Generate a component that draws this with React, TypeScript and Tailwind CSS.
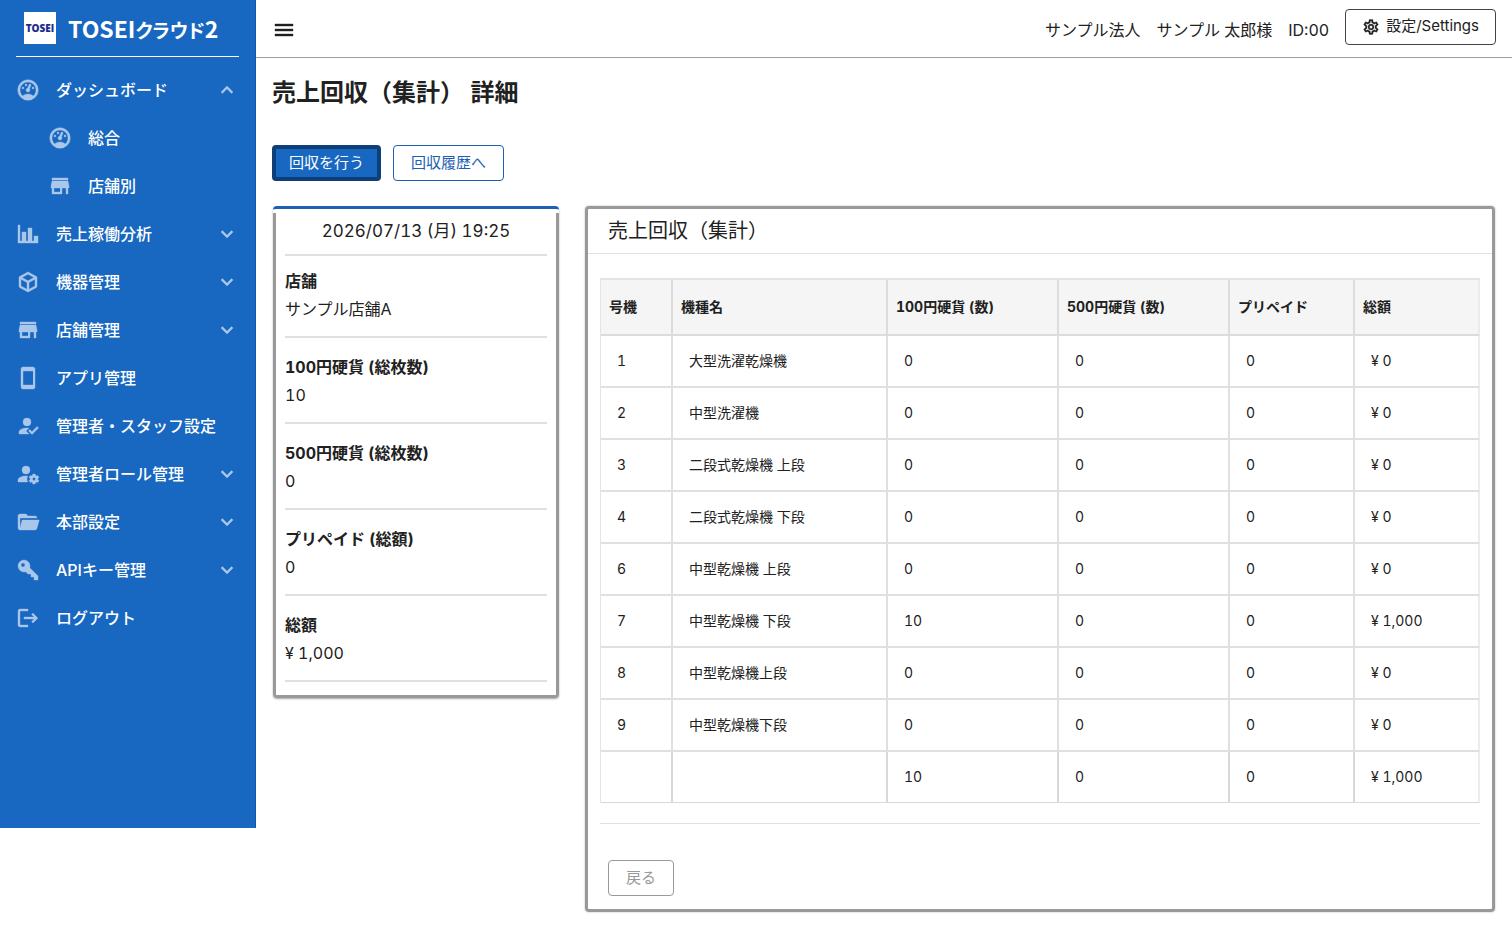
import React from "react";

const icons = {
  gauge:
    "M12,1.7A10.3,10.3 0 1,0 12,22.3A10.3,10.3 0 1,0 12,1.7M12,4A8,8 0 0,1 20,12C20,14.4 19,16.5 17.3,18C15.9,16.7 14,16 12,16C10,16 8.2,16.7 6.7,18C5,16.5 4,14.4 4,12A8,8 0 0,1 12,4M14,5.89C13.62,5.9 13.26,6.15 13.1,6.54L11.81,9.77L11.71,10C11,10.13 10.41,10.6 10.14,11.26C9.73,12.29 10.23,13.45 11.26,13.86C12.29,14.27 13.45,13.77 13.86,12.74C14.12,12.08 14,11.32 13.57,10.76L13.67,10.5L14.96,7.29L14.97,7.26C15.17,6.75 14.92,6.17 14.41,5.96C14.28,5.91 14.15,5.89 14,5.89M10,6A1,1 0 0,0 9,7A1,1 0 0,0 10,8A1,1 0 0,0 11,7A1,1 0 0,0 10,6M7,9A1,1 0 0,0 6,10A1,1 0 0,0 7,11A1,1 0 0,0 8,10A1,1 0 0,0 7,9M17,9A1,1 0 0,0 16,10A1,1 0 0,0 17,11A1,1 0 0,0 18,10A1,1 0 0,0 17,9Z",
  store: "M12,18H6V14H12M21,14V12L20,7H4L3,12V14H4V20H14V14H18V20H20V14M20,4H4V6H20V4Z",
  chart: "M22,21H2V3H4V19H6V10H10V19H12V6H16V19H18V14H22V21Z",
  cube: "M21,16.5C21,16.88 20.79,17.21 20.47,17.38L12.57,21.82C12.41,21.94 12.21,22 12,22C11.79,22 11.59,21.94 11.43,21.82L3.53,17.38C3.21,17.21 3,16.88 3,16.5V7.5C3,7.12 3.21,6.79 3.53,6.62L11.43,2.18C11.59,2.06 11.79,2 12,2C12.21,2 12.41,2.06 12.57,2.18L20.47,6.62C20.79,6.79 21,7.12 21,7.5V16.5M12,4.15L6.04,7.5L12,10.85L17.96,7.5L12,4.15M5,15.91L11,19.29V12.58L5,9.21V15.91M19,15.91V9.21L13,12.58V19.29L19,15.91Z",
  phone: "M17,19H7V5H17M17,1H7C5.89,1 5,1.89 5,3V21A2,2 0 0,0 7,23H17A2,2 0 0,0 19,21V3C19,1.89 18.1,1 17,1Z",
  accountCheck:
    "M21.1,12.5L22.5,13.91L15.97,20.5L12.5,17L13.9,15.59L15.97,17.67L21.1,12.5M10,17L13,20H3V18C3,15.79 6.58,14 11,14L12.89,14.11L10,17M11,4A4,4 0 0,1 15,8A4,4 0 0,1 11,12A4,4 0 0,1 7,8A4,4 0 0,1 11,4Z",
  accountCog:
    "M10 4A4 4 0 0 0 6 8A4 4 0 0 0 10 12A4 4 0 0 0 14 8A4 4 0 0 0 10 4M17 12C16.87 12 16.76 12.09 16.74 12.21L16.55 13.53C16.25 13.66 15.96 13.82 15.7 14L14.46 13.5C14.35 13.5 14.22 13.5 14.15 13.63L13.15 15.36C13.09 15.47 13.11 15.6 13.21 15.68L14.27 16.5C14.25 16.67 14.24 16.83 14.24 17C14.24 17.17 14.25 17.33 14.27 17.5L13.21 18.32C13.12 18.4 13.09 18.53 13.15 18.64L14.15 20.37C14.21 20.5 14.34 20.5 14.46 20.5L15.7 20C15.96 20.18 16.24 20.35 16.55 20.47L16.74 21.79C16.76 21.91 16.86 22 17 22H19C19.11 22 19.22 21.91 19.24 21.79L19.43 20.47C19.73 20.34 20 20.18 20.27 20L21.5 20.5C21.63 20.5 21.76 20.5 21.83 20.37L22.83 18.64C22.89 18.53 22.86 18.4 22.77 18.32L21.7 17.5C21.72 17.33 21.74 17.17 21.74 17C21.74 16.83 21.73 16.67 21.7 16.5L22.76 15.68C22.85 15.6 22.88 15.47 22.82 15.36L21.82 13.63C21.76 13.5 21.63 13.5 21.5 13.5L20.27 14C20 13.82 19.73 13.65 19.42 13.53L19.23 12.21C19.22 12.09 19.11 12 19 12H17M10 14C5.58 14 2 15.79 2 18V20H11.68A7 7 0 0 1 11 17A7 7 0 0 1 11.64 14.09C11.11 14.03 10.56 14 10 14M18 15.5C18.83 15.5 19.5 16.17 19.5 17C19.5 17.83 18.83 18.5 18 18.5C17.16 18.5 16.5 17.83 16.5 17C16.5 16.17 17.17 15.5 18 15.5Z",
  folder:
    "M19,20H4C2.89,20 2,19.1 2,18V6C2,4.89 2.89,4 4,4H10L12,6H19A2,2 0 0,1 21,8H21L4,8V18L6.14,10H23.21L20.93,18.5C20.7,19.37 19.92,20 19,20Z",
  key: "M22,18V22H18V19H15V16H12L9.74,13.74C9.19,13.91 8.61,14 8,14A6,6 0 0,1 2,8A6,6 0 0,1 8,2A6,6 0 0,1 14,8C14,8.61 13.91,9.19 13.74,9.74L22,18M7,5A2,2 0 0,0 5,7A2,2 0 0,0 7,9A2,2 0 0,0 9,7A2,2 0 0,0 7,5Z",
  logout:
    "M17 7L15.59 8.41L18.17 11H8V13H18.17L15.59 15.58L17 17L22 12M4 5H12V3H4C2.9 3 2 3.9 2 5V19C2 20.1 2.9 21 4 21H12V19H4V5Z",
  down: "M7.41,8.58L12,13.17L16.59,8.58L18,10L12,16L6,10L7.41,8.58Z",
  up: "M7.41,15.41L12,10.83L16.59,15.41L18,14L12,8L6,14L7.41,15.41Z",
  menu: "M3,6H21V8H3V6M3,11H21V13H3V11M3,16H21V18H3V16Z",
  cog: "M12,8A4,4 0 0,1 16,12A4,4 0 0,1 12,16A4,4 0 0,1 8,12A4,4 0 0,1 12,8M12,10A2,2 0 0,0 10,12A2,2 0 0,0 12,14A2,2 0 0,0 14,12A2,2 0 0,0 12,10M10,22C9.75,22 9.54,21.82 9.5,21.58L9.13,18.93C8.5,18.68 7.96,18.34 7.44,17.94L4.95,18.95C4.73,19.03 4.46,18.95 4.34,18.73L2.34,15.27C2.21,15.05 2.27,14.78 2.46,14.63L4.57,12.97L4.5,12L4.57,11L2.46,9.37C2.27,9.22 2.21,8.95 2.34,8.73L4.34,5.27C4.46,5.05 4.73,4.96 4.95,5.05L7.44,6.05C7.96,5.66 8.5,5.32 9.13,5.07L9.5,2.42C9.54,2.18 9.75,2 10,2H14C14.25,2 14.46,2.18 14.5,2.42L14.87,5.07C15.5,5.32 16.04,5.66 16.56,6.05L19.05,5.05C19.27,4.96 19.54,5.05 19.66,5.27L21.66,8.73C21.79,8.95 21.73,9.22 21.54,9.37L19.43,11L19.5,12L19.43,13L21.54,14.63C21.73,14.78 21.79,15.05 21.66,15.27L19.66,18.73C19.54,18.95 19.27,19.04 19.05,18.95L16.56,17.95C16.04,18.34 15.5,18.68 14.87,18.93L14.5,21.58C14.46,21.82 14.25,22 14,22H10M11.25,4L10.88,6.61C9.68,6.86 8.62,7.5 7.85,8.39L5.44,7.35L4.69,8.65L6.8,10.2C6.4,11.37 6.4,12.64 6.8,13.8L4.68,15.36L5.43,16.66L7.86,15.62C8.63,16.5 9.68,17.14 10.87,17.38L11.24,20H12.76L13.13,17.39C14.32,17.14 15.37,16.5 16.14,15.62L18.57,16.66L19.32,15.36L17.2,13.81C17.6,12.64 17.6,11.37 17.2,10.2L19.31,8.65L18.56,7.35L16.15,8.39C15.38,7.5 14.32,6.86 13.12,6.62L12.75,4H11.25Z",
};

type IconName = keyof typeof icons;

function Icon({ name, className }: { name: IconName; className: string }) {
  return (
    <svg
      viewBox="0 0 24 24"
      fill="currentColor"
      stroke="currentColor"
      strokeWidth="0.4"
      aria-hidden="true"
      className={className}
    >
      <path d={icons[name]} />
    </svg>
  );
}

type NavItem = { icon: IconName; label: string; nested?: boolean; toggle?: "up" | "down" };

const navItems: NavItem[] = [
  { icon: "gauge", label: "ダッシュボード", toggle: "up" },
  { icon: "gauge", label: "総合", nested: true },
  { icon: "store", label: "店舗別", nested: true },
  { icon: "chart", label: "売上稼働分析", toggle: "down" },
  { icon: "cube", label: "機器管理", toggle: "down" },
  { icon: "store", label: "店舗管理", toggle: "down" },
  { icon: "phone", label: "アプリ管理" },
  { icon: "accountCheck", label: "管理者・スタッフ設定" },
  { icon: "accountCog", label: "管理者ロール管理", toggle: "down" },
  { icon: "folder", label: "本部設定", toggle: "down" },
  { icon: "key", label: "APIキー管理", toggle: "down" },
  { icon: "logout", label: "ログアウト" },
];

function NavRow({ item }: { item: NavItem }) {
  const layout = item.nested
    ? "flex h-12 w-full items-center pl-12 pr-4 text-left"
    : "flex h-12 w-full items-center pl-4 pr-4 text-left";
  const content = (
    <>
      <Icon name={item.icon} className="mr-4 size-6 shrink-0 text-[#a9c7ea]" />
      <span className="flex-1 whitespace-nowrap pb-px">{item.label}</span>
      {item.toggle && <Icon name={item.toggle} className="size-6 shrink-0 text-[#a9c7ea]" />}
    </>
  );
  return (
    <li>
      {item.toggle ? (
        <button type="button" aria-expanded={item.toggle === "up"} className={layout}>
          {content}
        </button>
      ) : (
        <a href="#" className={layout}>
          {content}
        </a>
      )}
    </li>
  );
}

function Sidebar() {
  return (
    <aside className="min-h-[828px] w-64 shrink-0 self-start border-r border-[#1256a5] bg-[#1867c0] font-medium text-white">
      <div className="ml-4 mr-4 flex h-[57px] items-center gap-3 border-b border-white pl-2">
        <div className="flex size-8 shrink-0 items-center justify-center bg-white font-['Open_Sans'] text-[10px] font-extrabold text-[#1c2f8f]">
          TOSEI
        </div>
        <div className="flex items-baseline whitespace-nowrap font-['Noto_Sans_CJK_JP',sans-serif] text-[23px] font-bold">
          TOSEI
          <span className="text-[19px] [font-feature-settings:'palt']">クラウド</span>2
        </div>
      </div>
      <nav aria-label="メインメニュー" className="pt-[9px]">
        <ul>
          {navItems.map((item) => (
            <NavRow key={item.label} item={item} />
          ))}
        </ul>
      </nav>
    </aside>
  );
}

function TopBar() {
  return (
    <header className="flex h-[58px] items-center border-b border-[#a0a0a0] px-4">
      <button type="button" aria-label="メニュー" className="mt-0.5">
        <Icon name="menu" className="size-6" />
      </button>
      <div className="ml-auto mt-0.5 flex gap-4">
        <span>サンプル法人</span>
        <span>サンプル 太郎様</span>
        <span>ID:00</span>
      </div>
      <button
        type="button"
        className="mb-1 ml-4 flex h-9 items-center gap-1.5 rounded border border-[#444] px-4 text-[15px]"
      >
        <Icon name="cog" className="size-[18px]" />
        設定/Settings
      </button>
    </header>
  );
}

const summary = [
  { label: "店舗", value: "サンプル店舗A" },
  { label: "100円硬貨 (総枚数)", value: "10" },
  { label: "500円硬貨 (総枚数)", value: "0" },
  { label: "プリペイド (総額)", value: "0" },
  { label: "総額", value: "¥ 1,000" },
];

function SummaryCard() {
  return (
    <section className="w-[286px] shrink-0 rounded border-t-[3px] border-[#1e60b4] pt-1 shadow-[0_1px_2px_rgba(0,0,0,0.35)]">
      <div className="rounded-b border-x-[3px] border-b-[3px] border-[#999] px-[9px] pb-[13px]">
        <p className="flex h-[43px] justify-center border-b-2 border-[#e0e0e0] pt-[6px] text-[17px] leading-6">
          2026/07/13 (月) 19:25
        </p>
        <dl className="-mt-1 leading-7">
          {summary.map((entry) => (
            <div key={entry.label} className="border-b-2 border-[#e0e0e0] pb-[13px] pt-[15px]">
              <dt className="font-bold">{entry.label}</dt>
              <dd>{entry.value}</dd>
            </div>
          ))}
        </dl>
      </div>
    </section>
  );
}

const columns = [
  { title: "号機", width: "w-[72px]" },
  { title: "機種名", width: "w-[215px]" },
  { title: "100円硬貨 (数)", width: "w-[171px]" },
  { title: "500円硬貨 (数)", width: "w-[171px]" },
  { title: "プリペイド", width: "w-[125px]" },
  { title: "総額", width: "w-[125px]" },
];

const rows = [
  ["1", "大型洗濯乾燥機", "0", "0", "0", "¥ 0"],
  ["2", "中型洗濯機", "0", "0", "0", "¥ 0"],
  ["3", "二段式乾燥機 上段", "0", "0", "0", "¥ 0"],
  ["4", "二段式乾燥機 下段", "0", "0", "0", "¥ 0"],
  ["6", "中型乾燥機 上段", "0", "0", "0", "¥ 0"],
  ["7", "中型乾燥機 下段", "10", "0", "0", "¥ 1,000"],
  ["8", "中型乾燥機上段", "0", "0", "0", "¥ 0"],
  ["9", "中型乾燥機下段", "0", "0", "0", "¥ 0"],
];

const totals = ["", "", "10", "0", "0", "¥ 1,000"];

function CollectionTable() {
  return (
    <table className="w-full table-fixed border-separate border-spacing-0 border-l border-t-2 border-[#e4e4e4] text-left text-sm">
      <thead>
        <tr className="h-[56px] bg-[#f5f5f5]">
          {columns.map((column) => (
            <th
              key={column.title}
              scope="col"
              className={`${column.width} border-b-2 border-r-2 border-[#dcdcdc] px-2 font-bold last:border-r-[#ebebeb]`}
            >
              {column.title}
            </th>
          ))}
        </tr>
      </thead>
      <tbody>
        {rows.map((row) => (
          <tr key={row[0]} className="h-[52px]">
            {row.map((cell, index) => (
              <td key={index} className="border-b-2 border-r-2 border-[#e0e0e0] px-4 last:border-r-[#ebebeb]">
                {cell}
              </td>
            ))}
          </tr>
        ))}
      </tbody>
      <tfoot>
        <tr className="h-[51px]">
          {totals.map((cell, index) => (
            <td key={index} className="border-b border-r-2 border-[#d8d8d8] px-4 last:border-r-[#ebebeb]">
              {cell}
            </td>
          ))}
        </tr>
      </tfoot>
    </table>
  );
}

function DetailCard() {
  return (
    <section className="min-w-0 flex-1 rounded border-[3px] border-[#999] shadow-[0_0_2px_rgba(0,0,0,0.3)]">
      <h2 className="flex h-[45px] items-center border-b border-[#e0e0e0] px-5 text-xl leading-7">
        売上回収（集計）
      </h2>
      <div className="px-3 pt-6">
        <CollectionTable />
        <hr className="mt-5 border-[#e0e0e0]" />
        <div className="px-2 pb-[13px] pt-9">
          <button
            type="button"
            className="h-9 rounded border border-[#999] px-[17px] text-[15px] text-[#999]"
          >
            戻る
          </button>
        </div>
      </div>
    </section>
  );
}

export default function App() {
  return (
    <div className="flex min-h-screen bg-white font-['Inter','Noto_Sans_CJK_JP',sans-serif] text-base tabular-nums text-[#212121]">
      <Sidebar />
      <div className="min-w-0 flex-1">
        <TopBar />
        <main className="px-4 pb-4 pt-[17px]">
          <h1 className="text-2xl font-bold leading-9">売上回収（集計） 詳細</h1>
          <div className="mt-[34px] flex gap-3">
            <button
              type="button"
              className="h-9 rounded border-4 border-[#0f3f78] bg-[#1867c0] px-[13px] text-[15px] leading-5 text-white"
            >
              回収を行う
            </button>
            <button
              type="button"
              className="h-9 rounded border border-[#1e60b4] px-[17px] text-[15px] leading-5 text-[#1e60b4]"
            >
              回収履歴へ
            </button>
          </div>
          <div className="mt-[25px] flex items-start gap-[26px] px-px">
            <SummaryCard />
            <DetailCard />
          </div>
        </main>
      </div>
    </div>
  );
}
